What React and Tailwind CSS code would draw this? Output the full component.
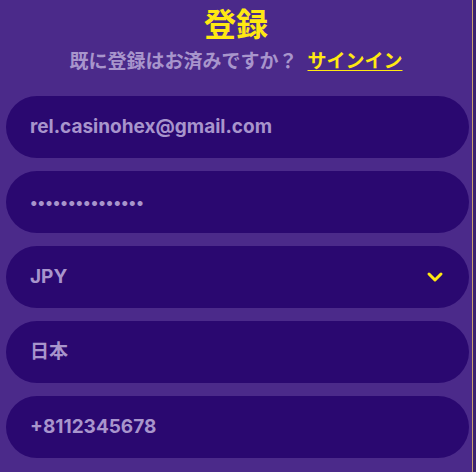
import { ChevronDown } from "lucide-react";

const fields = [
  { id: "email", value: "rel.casinohex@gmail.com" },
  { id: "password", value: "•••••••••••••••", dots: true },
  { id: "currency", value: "JPY", select: true },
  { id: "country", value: "日本" },
  { id: "phone", value: "+8112345678" },
];

export default function App() {
  return (
    <div
      className="flex h-[472px] w-[476px] bg-[#4b2a8a] overflow-hidden"
      style={{ fontFamily: "Inter, 'Noto Sans CJK JP', sans-serif" }}
    >
      <div className="w-[472px] flex flex-col">
        {/* Header */}
        <div className="flex flex-col items-center pt-[5px] h-[96px]">
          <h1 className="text-[32px] leading-[40px] font-bold text-[#ffe812]">登録</h1>
          <p className="mt-[4px] text-[19px] leading-[26px] font-bold text-[#a895cc]">
            既に登録はお済みですか？
            <a href="#" className="ml-[10px] text-[#ffe812] underline underline-offset-2">
              サインイン
            </a>
          </p>
        </div>

        {/* Form */}
        <div className="flex flex-col gap-[13px] pl-[6px] pr-[3px]">
          {fields.map((f) => (
            <div
              key={f.id}
              className="h-[62px] rounded-full bg-[#2a0870] flex items-center justify-between pl-[24px] pr-[22px]"
            >
              <span
                className={
                  f.dots
                    ? "text-[16px] font-bold text-[#a895cc]"
                    : "text-[19px] font-bold text-[#a895cc]"
                }
              >
                {f.value}
              </span>
              {f.select && <ChevronDown className="w-6 h-6 text-[#ffe812]" strokeWidth={3} />}
            </div>
          ))}
        </div>
      </div>
      <div className="w-px bg-[#c9a46e]" />
      <div className="flex-1 bg-[#3d2470]" />
    </div>
  );
}
